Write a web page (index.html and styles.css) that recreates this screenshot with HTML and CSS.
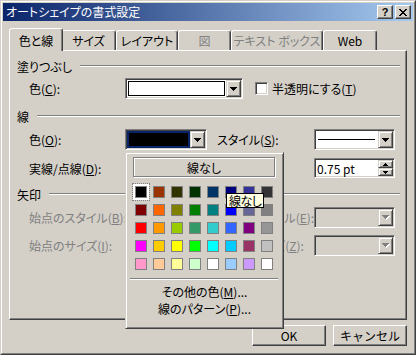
FILE: index.html
```html
<!DOCTYPE html>
<html lang="ja">
<head>
<meta charset="utf-8">
<title>オートシェイプの書式設定</title>
<link rel="stylesheet" href="styles.css">
</head>
<body>
<div class="win">
 <div class="win-in">
  <div class="titlebar">
   <span class="title">オートシェイプの書式設定</span>
   <div class="cap-btns">
    <span class="cap-btn help">?</span>
    <span class="cap-btn"><svg width="8" height="7" viewBox="0 0 8 7" shape-rendering="crispEdges"><path d="M0 0h2v1H0zM6 0h2v1H6zM1 1h2v1H1zM5 1h2v1H5zM2 2h4v1H2zM3 3h2v1H3zM2 4h4v1H2zM1 5h2v1H1zM5 5h2v1H5zM0 6h2v1H0zM6 6h2v1H6z" fill="#000"/></svg></span>
   </div>
  </div>

  <div class="tabs">
   <div class="tab sel">色と線</div>
   <div class="tab t-size">サイズ</div>
   <div class="tab t-layout">レイアウト</div>
   <div class="tab t-pic off">図</div>
   <div class="tab t-text off">テキスト ボックス</div>
   <div class="tab t-web">Web</div>
  </div>

  <div class="panel">
   <div class="group"><span>塗りつぶし</span><i class="etch"></i></div>
   <div class="row r1">
    <span class="lbl">色(<u>C</u>):</span>
    <div class="combo c-fill">
     <div class="field"><span class="sample s-white"></span></div>
     <span class="dd"><svg width="7" height="4" viewBox="0 0 7 4" shape-rendering="crispEdges"><path d="M0 0h7v1H0zM1 1h5v1H1zM2 2h3v1H2zM3 3h1v1H3z" fill="#000"/></svg></span>
    </div>
    <span class="check"></span>
    <span class="check-lbl">半透明にする(<u>T</u>)</span>
   </div>

   <div class="group g2"><span>線</span><i class="etch"></i></div>
   <div class="row r2">
    <span class="lbl">色(<u>O</u>):</span>
    <div class="combo c-short">
     <div class="field hl"><span class="sample s-black"></span></div>
     <span class="dd"><svg width="7" height="4" viewBox="0 0 7 4" shape-rendering="crispEdges"><path d="M0 0h7v1H0zM1 1h5v1H1zM2 2h3v1H2zM3 3h1v1H3z" fill="#000"/></svg></span>
    </div>
    <span class="lbl2">スタイル(<u>S</u>):</span>
    <div class="combo c-right">
     <div class="field lined"><span class="stroke"></span></div>
     <span class="dd"><svg width="7" height="4" viewBox="0 0 7 4" shape-rendering="crispEdges"><path d="M0 0h7v1H0zM1 1h5v1H1zM2 2h3v1H2zM3 3h1v1H3z" fill="#000"/></svg></span>
    </div>
   </div>
   <div class="row r3">
    <span class="lbl">実線/点線(<u>D</u>):</span>
    <div class="combo c-short">
     <div class="field lined"><span class="stroke"></span></div>
     <span class="dd"><svg width="7" height="4" viewBox="0 0 7 4" shape-rendering="crispEdges"><path d="M0 0h7v1H0zM1 1h5v1H1zM2 2h3v1H2zM3 3h1v1H3z" fill="#000"/></svg></span>
    </div>
    <span class="lbl2"></span>
    <div class="spin">
     <span class="val">0.75 pt</span>
     <div class="arrows">
      <span class="ab"><svg width="5" height="3" viewBox="0 0 5 3" shape-rendering="crispEdges"><path d="M2 0h1v1H2zM1 1h3v1H1zM0 2h5v1H0z" fill="#000"/></svg></span>
      <span class="ab"><svg width="5" height="3" viewBox="0 0 5 3" shape-rendering="crispEdges"><path d="M0 0h5v1H0zM1 1h3v1H1zM2 2h1v1H2z" fill="#000"/></svg></span>
     </div>
    </div>
   </div>

   <div class="group g3"><span>矢印</span><i class="etch"></i></div>
   <div class="row r4">
    <span class="lbl off">始点のスタイル(<u>B</u>):</span>
    <div class="combo c-short dis">
     <div class="field"></div>
     <span class="dd"><svg width="8" height="5" viewBox="0 0 8 5" shape-rendering="crispEdges"><path d="M1 1h7v1H1zM2 2h5v1H2zM3 3h3v1H3zM4 4h1v1H4z" fill="#fff"/><path d="M0 0h7v1H0zM1 1h5v1H1zM2 2h3v1H2zM3 3h1v1H3z" fill="#808080"/></svg></span>
    </div>
    <span class="lbl2 off">終点のスタイル(<u>E</u>):</span>
    <div class="combo c-right dis">
     <div class="field"></div>
     <span class="dd"><svg width="8" height="5" viewBox="0 0 8 5" shape-rendering="crispEdges"><path d="M1 1h7v1H1zM2 2h5v1H2zM3 3h3v1H3zM4 4h1v1H4z" fill="#fff"/><path d="M0 0h7v1H0zM1 1h5v1H1zM2 2h3v1H2zM3 3h1v1H3z" fill="#808080"/></svg></span>
    </div>
   </div>
   <div class="row r5">
    <span class="lbl off">始点のサイズ(<u>I</u>):</span>
    <div class="combo c-short dis">
     <div class="field"></div>
     <span class="dd"><svg width="8" height="5" viewBox="0 0 8 5" shape-rendering="crispEdges"><path d="M1 1h7v1H1zM2 2h5v1H2zM3 3h3v1H3zM4 4h1v1H4z" fill="#fff"/><path d="M0 0h7v1H0zM1 1h5v1H1zM2 2h3v1H2zM3 3h1v1H3z" fill="#808080"/></svg></span>
    </div>
    <span class="lbl2 off">終点のサイズ(<u>Z</u>):</span>
    <div class="combo c-right dis">
     <div class="field"></div>
     <span class="dd"><svg width="8" height="5" viewBox="0 0 8 5" shape-rendering="crispEdges"><path d="M1 1h7v1H1zM2 2h5v1H2zM3 3h3v1H3zM4 4h1v1H4z" fill="#fff"/><path d="M0 0h7v1H0zM1 1h5v1H1zM2 2h3v1H2zM3 3h1v1H3z" fill="#808080"/></svg></span>
    </div>
   </div>

   <div class="popup">
    <div class="noline">線なし</div>
    <div class="grid">
     <span class="sw cur" style="background:#000000"></span>
     <span class="sw" style="background:#993300"></span>
     <span class="sw" style="background:#333300"></span>
     <span class="sw" style="background:#003300"></span>
     <span class="sw" style="background:#003366"></span>
     <span class="sw" style="background:#000080"></span>
     <span class="sw" style="background:#333399"></span>
     <span class="sw" style="background:#333333"></span>
     <span class="sw" style="background:#800000"></span>
     <span class="sw" style="background:#FF6600"></span>
     <span class="sw" style="background:#808000"></span>
     <span class="sw" style="background:#008000"></span>
     <span class="sw" style="background:#008080"></span>
     <span class="sw" style="background:#0000FF"></span>
     <span class="sw" style="background:#666699"></span>
     <span class="sw" style="background:#808080"></span>
     <span class="sw" style="background:#FF0000"></span>
     <span class="sw" style="background:#FF9900"></span>
     <span class="sw" style="background:#99CC00"></span>
     <span class="sw" style="background:#339966"></span>
     <span class="sw" style="background:#33CCCC"></span>
     <span class="sw" style="background:#3366FF"></span>
     <span class="sw" style="background:#800080"></span>
     <span class="sw" style="background:#969696"></span>
     <span class="sw" style="background:#FF00FF"></span>
     <span class="sw" style="background:#FFCC00"></span>
     <span class="sw" style="background:#FFFF00"></span>
     <span class="sw" style="background:#00FF00"></span>
     <span class="sw" style="background:#00FFFF"></span>
     <span class="sw" style="background:#00CCFF"></span>
     <span class="sw" style="background:#993366"></span>
     <span class="sw" style="background:#C0C0C0"></span>
     <span class="sw" style="background:#FF99CC"></span>
     <span class="sw" style="background:#FFCC99"></span>
     <span class="sw" style="background:#FFFF99"></span>
     <span class="sw" style="background:#CCFFCC"></span>
     <span class="sw" style="background:#FFFFFF"></span>
     <span class="sw" style="background:#99CCFF"></span>
     <span class="sw" style="background:#CC99FF"></span>
     <span class="sw" style="background:#FFFFFF"></span>
    </div>
    <div class="sep"></div>
    <div class="mi">その他の色(<u>M</u>)...</div>
    <div class="mi">線のパターン(<u>P</u>)...</div>
    <div class="tip">線なし</div>
   </div>
  </div>

  <div class="buttons">
   <button class="btn">OK</button>
   <button class="btn">キャンセル</button>
  </div>
 </div>
</div>
</body>
</html>
```

FILE: styles.css
```css
* { box-sizing: border-box; }
html, body { margin: 0; padding: 0; }
body {
  width: 416px;
  height: 355px;
  overflow: hidden;
  background: #D4D0C8;
  font-family: "Noto Sans CJK JP", "Noto Sans", sans-serif;
  font-size: 12px;
  color: #000;
  font-feature-settings: "palt";
}
u { text-decoration: underline; text-underline-offset: 1px; }

.win {
  width: 416px;
  height: 355px;
  border: 1px solid;
  border-color: #D4D0C8 #404040 #404040 #D4D0C8;
}
.win-in {
  height: 100%;
  border: 1px solid;
  border-color: #fff #808080 #808080 #fff;
  padding: 1px;
  display: flex;
  flex-direction: column;
}

/* title bar */
.titlebar {
  height: 18px;
  flex: none;
  display: flex;
  align-items: center;
  justify-content: space-between;
  padding: 0 2px 0 3px;
  background: linear-gradient(to right, #0A246A, #A6CAF0);
  color: #fff;
}
.title { font-size: 12px; line-height: 18px; }
.cap-btns { display: flex; gap: 2px; }
.cap-btn {
  width: 16px;
  height: 14px;
  background: #D4D0C8;
  border: 1px solid;
  border-color: #fff #404040 #404040 #fff;
  box-shadow: inset -1px -1px #808080;
  display: flex;
  align-items: center;
  justify-content: center;
  color: #000;
}
.help { font: bold 11px/1 "Liberation Sans", sans-serif; }

/* tabs */
.tabs {
  flex: none;
  display: flex;
  align-items: flex-end;
  height: 22px;
  margin: 7px 0 0 6px;
  padding-left: 2px;
  position: relative;
  z-index: 2;
}
.tab {
  height: 20px;
  display: flex;
  align-items: center;
  justify-content: center;
  background: #D4D0C8;
  border: 1px solid;
  border-bottom: 0;
  border-color: #fff #404040 transparent #fff;
  box-shadow: inset -1px 0 #808080;
  border-radius: 3px 3px 0 0;
  white-space: nowrap;
}
.tab.sel {
  width: 54px;
  height: 23px;
  margin: 0 -2px -1px;
  position: relative;
  z-index: 1;
}
.t-size { width: 55px; }
.t-layout { width: 62px; }
.t-pic { width: 53px; }
.t-text { width: 92px; }
.t-web { width: 54px; }
.tab.off { color: #808080; }

/* panel */
.panel {
  position: relative;
  flex: none;
  width: 398px;
  height: 270px;
  margin-left: 6px;
  border: 1px solid;
  border-color: #fff #404040 #404040 #fff;
  box-shadow: inset -1px -1px #808080;
  padding: 9px 6px 0 7px;
}
.group {
  display: flex;
  align-items: center;
  height: 12px;
  white-space: nowrap;
}
.etch {
  flex: 1;
  height: 2px;
  margin-left: 8px;
  border-top: 1px solid #808080;
  border-bottom: 1px solid #fff;
}
.g2 { margin-top: 11px; }
.g3 { margin-top: 10px; }

.row {
  display: flex;
  align-items: center;
  height: 21px;
  padding-left: 12px;
  white-space: nowrap;
}
.r1 { margin-top: 6px; }
.r2 { margin-top: 7px; }
.r3 { margin-top: 8px; height: 20px; }
.r4 { margin-top: 7px; }
.r5 { margin-top: 7px; }
.lbl { width: 96px; flex: none; }
.lbl2 { width: 97px; margin-left: 10px; flex: none; overflow: hidden; }
.off { color: #808080; }

/* combo boxes */
.combo {
  display: flex;
  height: 21px;
  flex: none;
  border: 1px solid;
  border-color: #808080 #fff #fff #808080;
  box-shadow: inset 1px 1px #404040, inset -1px -1px #D4D0C8;
  padding: 1px;
  background: #fff;
}
.c-fill { width: 118px; }
.c-short { width: 82px; }
.c-right { width: 81px; }
.combo.dis { background: #D4D0C8; }
.field {
  flex: 1;
  display: flex;
  padding: 1px;
}
.field.hl { background: #0A246A; padding: 2px; }
.sample { flex: 1; border: 1px solid #000; }
.s-white { background: #fff; }
.s-black { background: #000; }
.field.lined { align-items: center; padding: 0 3px 0 2px; }
.stroke { flex: 1; height: 1px; background: #000; }
.dd {
  width: 15px;
  flex: none;
  display: flex;
  align-items: center;
  justify-content: center;
  background: #D4D0C8;
  border: 1px solid;
  border-color: #D4D0C8 #404040 #404040 #D4D0C8;
  box-shadow: inset 1px 1px #fff, inset -1px -1px #808080;
}
.dd svg { display: block; }

/* checkbox */
.check {
  width: 13px;
  height: 13px;
  flex: none;
  margin-left: 12px;
  background: #fff;
  border: 1px solid;
  border-color: #808080 #fff #fff #808080;
  box-shadow: inset 1px 1px #404040, inset -1px -1px #D4D0C8;
}
.check-lbl { margin-left: 4px; }

/* spinner */
.spin {
  width: 81px;
  height: 20px;
  flex: none;
  display: flex;
  border: 1px solid;
  border-color: #808080 #fff #fff #808080;
  box-shadow: inset 1px 1px #404040, inset -1px -1px #D4D0C8;
  padding: 1px;
  background: #fff;
}
.val {
  flex: 1;
  padding-left: 1px;
  display: flex;
  align-items: center;
  font-feature-settings: normal;
}
.arrows { width: 15px; flex: none; display: flex; flex-direction: column; }
.ab {
  flex: 1;
  display: flex;
  align-items: center;
  justify-content: center;
  background: #D4D0C8;
  border: 1px solid;
  border-color: #D4D0C8 #404040 #404040 #D4D0C8;
  box-shadow: inset 1px 1px #fff, inset -1px -1px #808080;
}
.ab svg { display: block; }

/* color popup (overlay) */
.popup {
  position: absolute;
  left: 115px;
  top: 101px;
  width: 159px;
  height: 177px;
  z-index: 5;
  background: #D4D0C8;
  border: 1px solid;
  border-color: #D4D0C8 #404040 #404040 #D4D0C8;
  box-shadow: inset 1px 1px #fff, inset -1px -1px #808080;
  padding-top: 4px;
  display: flex;
  flex-direction: column;
}
.noline {
  margin-left: 7px;
  width: 142px;
  height: 20px;
  display: flex;
  align-items: center;
  justify-content: center;
  border: 1px solid #808080;
  box-shadow: inset 1px 1px #fff, 1px 1px #fff;
}
.grid {
  margin: 9px 0 0 9px;
  display: grid;
  grid-template-columns: repeat(8, 12px);
  grid-auto-rows: 12px;
  gap: 6px;
}
.sw { display: block; border: 1px solid #808080; }
.sw.cur {
  box-shadow: 0 0 0 2px #fff;
  outline: 1px dotted #808080;
  outline-offset: 2px;
}
.sep {
  margin: 8px 0 0 4px;
  width: 148px;
  height: 2px;
  border-top: 1px solid #808080;
  border-bottom: 1px solid #fff;
}
.mi {
  height: 17px;
  display: flex;
  align-items: center;
  justify-content: center;
  white-space: nowrap;
}
.sep + .mi { margin-top: 3px; }
.tip {
  position: absolute;
  left: 100px;
  top: 40px;
  height: 15px;
  background: #FFFFE1;
  border: 1px solid #000;
  font-size: 12px;
  line-height: 13px;
  padding: 0 2px;
  letter-spacing: -0.5px;
  white-space: nowrap;
}

/* bottom buttons */
.buttons {
  display: flex;
  justify-content: flex-end;
  gap: 7px;
  margin: 5px 6px 0 0;
}
.btn {
  width: 74px;
  height: 21px;
  padding: 0;
  font-family: inherit;
  font-size: 12px;
  color: #000;
  background: #D4D0C8;
  border: 1px solid;
  border-color: #fff #404040 #404040 #fff;
  box-shadow: inset -1px -1px #808080;
  display: flex;
  align-items: center;
  justify-content: center;
}
```
